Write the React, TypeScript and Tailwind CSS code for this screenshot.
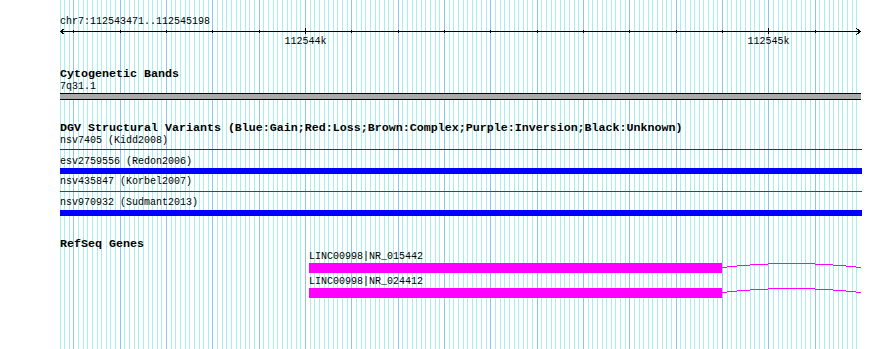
const START = 112543471;
const END = 112545198;
const LEFT = 60;
const WIDTH = 800;

const toX = (bp: number) => Math.round(LEFT + ((bp - START) * WIDTH) / (END - START));

const gridLines = Array.from({ length: 173 }, (_, i) => 112543470 + i * 10);
const ticks = gridLines.filter((bp) => bp % 100 === 0);

const mono = "font-['Liberation_Mono','DejaVu_Sans_Mono',monospace]";

const Grid = () => (
  <svg className="absolute inset-0" width={890} height={349} shapeRendering="crispEdges">
    {gridLines.map((bp) => (
      <rect
        key={bp}
        x={toX(bp)}
        y={0}
        width={1}
        height={349}
        fill={bp % 100 === 0 ? "#88c8f0" : "#a8f0f0"}
      />
    ))}
  </svg>
);

const Ruler = () => (
  <svg width={802} height={23} className="block" shapeRendering="crispEdges">
    <rect x={0} y={4} width={801} height={1} fill="#000" />
    <path d="M4.5 1.5 L0.5 4.5 L4.5 7.5" stroke="#000" fill="none" />
    <path d="M796.5 1.5 L800.5 4.5 L796.5 7.5" stroke="#000" fill="none" />
    {ticks.map((bp) => {
      const major = bp % 1000 === 0;
      return (
        <rect
          key={bp}
          x={toX(bp) - LEFT}
          y={major ? 1 : 3}
          width={1}
          height={major ? 6 : 3}
          fill="#000"
        />
      );
    })}
    {[112544000, 112545000].map((bp) => (
      <text
        key={bp}
        x={toX(bp) - LEFT + 0.5}
        y={16.5}
        textAnchor="middle"
        fontFamily="Liberation Mono, monospace"
        fontSize={10}
        fill="#000"
      >
        {bp / 1000}k
      </text>
    ))}
  </svg>
);

const Title = ({ children, className = "" }: { children: string; className?: string }) => (
  <div className={`${mono} text-[11.67px] leading-[12px] h-[12px] font-bold text-black whitespace-nowrap ${className}`}>
    {children}
  </div>
);

const Label = ({ children, className = "" }: { children: string; className?: string }) => (
  <div className={`${mono} text-[10px] leading-[10px] h-[10px] text-black whitespace-nowrap ${className}`}>
    {children}
  </div>
);

const Intron = () => (
  <svg width={139} height={10} className="block overflow-visible" shapeRendering="crispEdges">
    <path d="M0 4.5 Q69.5 -3.5 139 4.5" stroke="#ff00ff" strokeWidth={1} fill="none" />
  </svg>
);

const Gene = ({ name, className = "" }: { name: string; className?: string }) => (
  <div className={`ml-[249px] flex flex-col ${className}`}>
    <Label>{name}</Label>
    <div className="mt-[1px] flex">
      <div className="h-[10px] w-[413px] bg-[#ff00ff]" />
      <Intron />
    </div>
  </div>
);

export default function App() {
  return (
    <div className="relative w-[890px] h-[349px] overflow-hidden bg-white">
      <Grid />
      <div className="relative ml-[60px] w-[802px] flex flex-col">
        <Label className="mt-[17px]">chr7:112543471..112545198</Label>
        <Ruler />

        <Title className="mt-[18px]">Cytogenetic Bands</Title>
        <Label className="mt-[2px]">7q31.1</Label>
        <div className="mt-[1px] h-[7px] w-[801px] border-y border-black bg-[#aaaaaa]" />

        <Title className="mt-[22px]">
          DGV Structural Variants (Blue:Gain;Red:Loss;Brown:Complex;Purple:Inversion;Black:Unknown)
        </Title>
        <Label className="mt-[2px]">nsv7405 (Kidd2008)</Label>
        <div className="mt-[3px] h-[1px] w-full bg-[#3c2478]" />
        <Label className="mt-[7px]">esv2759556 (Redon2006)</Label>
        <div className="mt-[1px] h-[6px] w-full bg-[#0000ff]" />
        <Label className="mt-[3px]">nsv435847 (Korbel2007)</Label>
        <div className="mt-[4px] h-[1px] w-full bg-[#e00000]" />
        <Label className="mt-[6px]">nsv970932 (Sudmant2013)</Label>
        <div className="mt-[2px] h-[6px] w-full bg-[#0000ff]" />

        <Title className="mt-[22px]">RefSeq Genes</Title>
        <Gene name="LINC00998|NR_015442" className="mt-[2px]" />
        <Gene name="LINC00998|NR_024412" className="mt-[4px]" />
      </div>
    </div>
  );
}
